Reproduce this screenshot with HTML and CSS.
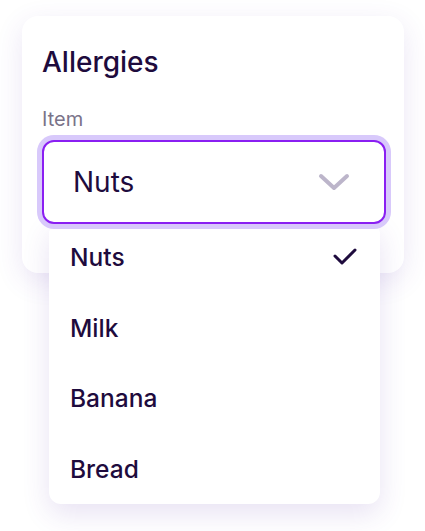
FILE: index.html
```html
<!DOCTYPE html>
<html lang="en">
<head>
    <meta charset="UTF-8">
    <meta name="viewport" content="width=device-width, initial-scale=1.0">
    <title>Allergies</title>
    <link rel="stylesheet" href="styles.css">
</head>
<body>
    <div class="page">
        <div class="card">
            <h2 class="card-title">Allergies</h2>
            <label class="field-label">Item</label>

            <div class="select-wrap">
                <div class="select">
                    <span class="select-value">Nuts</span>
                    <svg class="chevron" width="32" height="20" viewBox="0 0 32 20">
                        <path d="M3 4 L16 16 L29 4" fill="none" stroke="#bcb5ca" stroke-width="4" stroke-linecap="round" stroke-linejoin="round"/>
                    </svg>
                </div>

                <ul class="menu">
                    <li class="menu-item selected">
                        <span>Nuts</span>
                        <svg class="check" width="26" height="20" viewBox="0 0 26 20">
                            <path d="M3 9 L10 16 L23 3" fill="none" stroke="#1e0b3d" stroke-width="3" stroke-linecap="round" stroke-linejoin="round"/>
                        </svg>
                    </li>
                    <li class="menu-item"><span>Milk</span></li>
                    <li class="menu-item"><span>Banana</span></li>
                    <li class="menu-item"><span>Bread</span></li>
                </ul>
            </div>
        </div>
    </div>
</body>
</html>
```

FILE: styles.css
```css
body {
    margin: 0;
    background: #fff;
    font-family: Inter, "Noto Sans", sans-serif;
    color: #1e0b3d;
}
.page {
    min-height: 531px;
    box-sizing: border-box;
    padding: 16px 21px 0 22px;
}
.card {
    width: 382px;
    box-sizing: border-box;
    background: #fff;
    border-radius: 16px;
    padding: 29px 18px 49px 20px;
    box-shadow: 0 8px 28px rgba(90, 50, 170, 0.12);
}
.card-title {
    margin: 0;
    font-size: 28px;
    line-height: 34px;
    font-weight: 500;
}
.field-label {
    display: block;
    margin-top: 28px;
    font-size: 20px;
    line-height: 24px;
    color: #7a7389;
}
.select-wrap {
    position: relative;
    margin-top: 9px;
}
.select {
    position: relative;
    z-index: 2;
    height: 84px;
    box-sizing: border-box;
    display: flex;
    align-items: center;
    justify-content: space-between;
    padding: 0 34px 0 29px;
    background: #fff;
    border: 2px solid #8a1ff2;
    border-radius: 12px;
    box-shadow: 0 0 0 5px #d8c9fb;
}
.select-value {
    font-size: 28px;
    line-height: 34px;
}
.chevron {
    display: block;
}
.menu {
    position: absolute;
    z-index: 1;
    top: 82px;
    left: 7px;
    width: 331px;
    box-sizing: border-box;
    margin: 0;
    padding: 0 24px 0 21px;
    list-style: none;
    background: #fff;
    border-radius: 12px;
    box-shadow: 0 10px 28px rgba(90, 50, 170, 0.14);
}
.menu-item {
    height: 70.5px;
    display: flex;
    align-items: center;
    justify-content: space-between;
    font-size: 24.5px;
    font-weight: 500;
}
.check {
    display: block;
    margin-right: -2px;
}
```
